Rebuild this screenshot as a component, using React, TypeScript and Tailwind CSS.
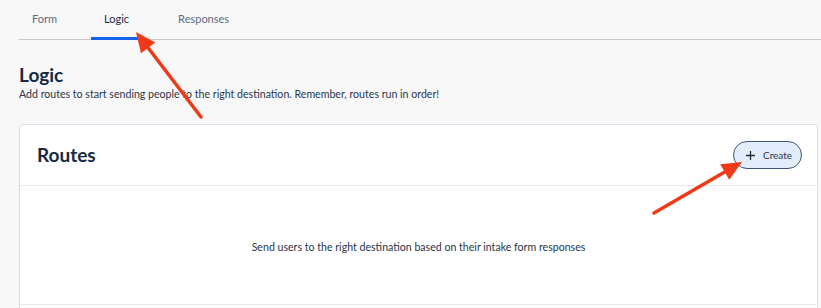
import React from 'react';

const tabs = ['Form', 'Logic', 'Responses'];

const Arrow = ({ x1, y1, x2, y2 }: { x1: number; y1: number; x2: number; y2: number }) => {
  // shaft ends a bit before the tip so the head sits on top
  const dx = x2 - x1;
  const dy = y2 - y1;
  const len = Math.sqrt(dx * dx + dy * dy);
  const ux = dx / len;
  const uy = dy / len;
  const head = 20;
  const half = 9;
  const bx = x2 - ux * head;
  const by = y2 - uy * head;
  const px = -uy * half;
  const py = ux * half;
  return (
    <g>
      <line x1={x1} y1={y1} x2={bx + ux * 2} y2={by + uy * 2} stroke="#f03a17" strokeWidth={3.5} strokeLinecap="round" />
      <polygon points={`${x2},${y2} ${bx + px},${by + py} ${bx - px},${by - py}`} fill="#f03a17" />
    </g>
  );
};

export default function App() {
  return (
    <div className="relative w-[821px] h-[308px] overflow-hidden bg-[#f8f8f9] font-['Lato',sans-serif] text-[#1a2b42]">
      {/* Tabs */}
      <div className="ml-[19px] flex h-[40px] items-end border-b border-[#c9c9cc]">
        {tabs.map((t, i) => (
          <div
            key={t}
            className={
              'flex h-[40px] items-center px-[13px] text-[11px] ' +
              (i === 0 ? 'mr-[21px] ' : i === 1 ? 'mr-[23px] ' : '') +
              (t === 'Logic'
                ? 'text-[#1f2d44] border-b-[3px] border-[#1463e8] pt-[1px] -mb-[1px]'
                : 'text-[#5d6b82] pt-[1px]')
            }
          >
            {t}
          </div>
        ))}
      </div>

      {/* Header */}
      <div className="px-[19px] pt-[23px]">
        <h1 className="text-[19px] font-bold leading-[24px] text-[#172a44]">Logic</h1>
        <p className="text-[10.6px] leading-[14px] text-[#2a3547]">
          Add routes to start sending people to the right destination. Remember, routes run in order!
        </p>
      </div>

      {/* Routes card */}
      <div className="ml-[19px] mr-[3px] mt-[23px] rounded-[4px] border border-[#d6e0ec] bg-white">
        <div className="flex h-[61px] items-center justify-between border-b border-[#e8ecf1] pl-[17px] pr-[15px]">
          <h2 className="text-[19px] font-bold text-[#172a44]">Routes</h2>
          <button className="flex h-[28px] w-[69px] items-center gap-[7px] rounded-full border border-[#3f5775] bg-[#e2ecfb] pl-[11px] text-[10px] text-[#2b3a50]">
            <svg width="11" height="11" viewBox="0 0 11 11">
              <path d="M5.5 1v9M1 5.5h9" stroke="#1d2a3c" strokeWidth="1.3" />
            </svg>
            Create
          </button>
        </div>
        <div className="flex h-[119px] items-center justify-center border-b border-[#e8ecf1] pt-[6px] text-[10.6px] text-[#2a3547]">
          Send users to the right destination based on their intake form responses
        </div>
        <div className="h-[20px]" />
      </div>

      {/* Annotation arrows */}
      <svg className="pointer-events-none absolute left-0 top-0" width="821" height="308">
        <Arrow x1={201} y1={117} x2={136} y2={32} />
        <Arrow x1={654} y1={213} x2={742} y2={162} />
      </svg>
    </div>
  );
}
